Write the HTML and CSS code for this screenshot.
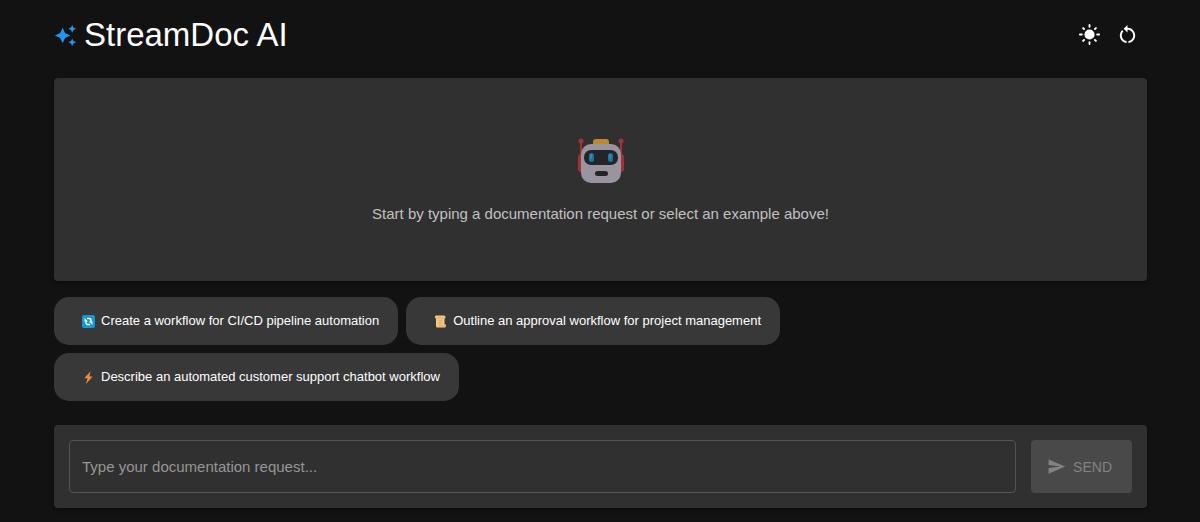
FILE: index.html
```html
<!DOCTYPE html>
<html lang="en">
<head>
<meta charset="utf-8">
<meta name="viewport" content="width=device-width, initial-scale=1">
<title>StreamDoc AI</title>
<link rel="stylesheet" href="styles.css">
</head>
<body>
<div class="container">
  <header class="header">
    <h1 class="title">
      <svg class="icon title-icon" viewBox="0 0 24 24" aria-hidden="true"><path d="m19 9 1.250-2.750L23 5l-2.750-1.250L19 1l-1.250 2.750L15 5l2.750 1.250zm0 6-1.250 2.750L15 19l2.750 1.250L19 23l1.250-2.750L23 19l-2.750-1.250zm-7.500-5.500L9 4 6.500 9.500 1 12l5.500 2.500L9 20l2.500-5.500L17 12z"/></svg>
      StreamDoc AI
    </h1>
    <div class="actions">
      <button class="icon-button" type="button" aria-label="Toggle theme">
        <svg class="icon" viewBox="0 0 24 24" aria-hidden="true"><circle cx="12" cy="12" r="5.300"/><g class="rays"><path d="M12 2v2M12 20v2M2 12h2M20 12h2M5.300 5.300l1 1M17.700 17.700l1 1M5.300 18.700l1-1M17.700 6.300l1-1"/></g></svg>
      </button>
      <button class="icon-button" type="button" aria-label="Reset conversation">
        <svg class="icon" viewBox="0 0 24 24" aria-hidden="true"><path d="M12 5V2L8 6l4 4V7c3.310 0 6 2.690 6 6 0 2.970-2.170 5.430-5 5.910v2.020c3.950-.490 7-3.850 7-7.930 0-4.420-3.580-8-8-8m-6 8c0-1.650.670-3.150 1.760-4.240L6.340 7.340C4.900 8.790 4 10.790 4 13c0 4.080 3.050 7.440 7 7.930v-2.020c-2.830-.480-5-2.940-5-5.910"/></svg>
      </button>
    </div>
  </header>

  <main>
    <section class="panel empty">
      <svg class="robot" viewBox="0 0 46 46" aria-hidden="true">
        <g fill="#a33238">
          <rect x="2" y="3" width="2" height="16"/><rect x="42" y="3" width="2" height="16"/>
          <circle cx="3" cy="3" r="2.500"/><circle cx="43" cy="3" r="2.500"/>
          <rect x="0" y="16" width="6" height="18" rx="3"/><rect x="40" y="16" width="6" height="18" rx="3"/>
        </g>
        <rect x="15" y="1" width="16" height="8" rx="3" fill="#bd8930"/>
        <rect x="3" y="6" width="40" height="39" rx="10" fill="#99949e"/>
        <rect x="6" y="12" width="34" height="15" rx="7" fill="#24242a"/>
        <rect x="11" y="15" width="5" height="9" rx="2.500" fill="#17759e"/>
        <rect x="30" y="15" width="5" height="9" rx="2.500" fill="#17759e"/>
        <path d="M13 17v3M32 17v3" stroke="#3696b8" stroke-width="1.500" stroke-linecap="round"/>
        <rect x="17" y="33" width="13" height="5" rx="2.500" fill="#24242a"/>
      </svg>
      <p class="empty-text">Start by typing a documentation request or select an example above!</p>
    </section>

    <div class="examples">
      <button class="chip" type="button">
        <svg class="emoji" viewBox="0 0 13 13" aria-hidden="true"><rect width="13" height="13" rx="2" fill="#1597d8"/><path d="M4 6v2q0 1.500 1.500 1.500H8M9 7V5q0-1.500-1.500-1.500H5" fill="none" stroke="#fff" stroke-width="1.300"/><path d="M2.500 3v3.500H6zM10.500 10V6.500H7z" fill="#fff"/></svg>
        Create a workflow for CI/CD pipeline automation
      </button>
      <button class="chip" type="button">
        <svg class="emoji" viewBox="0 0 13 13" aria-hidden="true"><path d="M2 .500h8q1.500 0 1.500 1.500T10.500 3.500V9.500h1.500v1.500q0 1.500-1.500 1.500H3.500Q2 12.500 2 11V3.500Q.8 3.500.8 2T2 .500z" fill="#f5c785"/><path d="M2 2.800h8.500M4.500 10.800h7" stroke="#dfa05f" stroke-width=".8"/><path d="M4.500 5.300h4M4.500 7.100h4M4.500 8.900h3" stroke="#d0a066" stroke-width=".7"/></svg>
        Outline an approval workflow for project management
      </button>
      <button class="chip" type="button">
        <svg class="emoji" viewBox="0 0 13 13" aria-hidden="true"><path d="M8.500.200 2.300 7.300h3.200L4 12.900l6.700-7.500H7.400z" fill="#f08a3c"/></svg>
        Describe an automated customer support chatbot workflow
      </button>
    </div>

    <form class="panel composer">
      <input class="field" type="text" aria-label="Documentation request" placeholder="Type your documentation request...">
      <button class="send" type="submit" disabled>
        <svg class="icon send-icon" viewBox="0 0 24 24" aria-hidden="true"><path d="M2.010 21 23 12 2.010 3 2 10l15 2-15 2z"/></svg>
        SEND
      </button>
    </form>
  </main>
</div>
</body>
</html>
```
FILE: styles.css
```css
* {
  box-sizing: border-box;
}

body {
  margin: 0;
  background: #121212;
  color: #fff;
  font-family: "Liberation Sans", Arial, sans-serif;
  font-size: 15px;
}

button,
input {
  font: inherit;
  color: inherit;
}

.container {
  padding: 15px 53px 14px 54px;
}

.header {
  display: flex;
  align-items: center;
  justify-content: space-between;
  margin-bottom: 23px;
}

.title {
  display: flex;
  align-items: center;
  gap: 7px;
  margin: 0;
  font-size: 33px;
  font-weight: 400;
  line-height: 40px;
}

.icon {
  display: block;
  width: 23px;
  height: 23px;
  fill: currentColor;
}

.title-icon {
  color: #2196f3;
}

.rays {
  fill: none;
  stroke: currentColor;
  stroke-width: 2;
  stroke-linecap: round;
}

.actions {
  display: flex;
}

.icon-button {
  padding: 7px 8px 9px 7px;
  border: 0;
  border-radius: 50%;
  background: none;
}

.panel {
  border-radius: 4px;
  background: #303030;
  box-shadow: 0 2px 4px rgba(0, 0, 0, 0.4);
}

.empty {
  display: flex;
  flex-direction: column;
  align-items: center;
  padding: 60px 15px 56px;
}

.robot {
  width: 46px;
  height: 46px;
}

.empty-text {
  margin: 19px 0 0;
  color: #c1c1c1;
  line-height: 22px;
}

.examples {
  display: flex;
  flex-wrap: wrap;
  gap: 8px;
  margin: 16px 0 24px;
}

.chip {
  display: flex;
  align-items: center;
  gap: 6px;
  padding: 12px 19px 12px 28px;
  border: 0;
  border-radius: 15px;
  background: #383838;
  font-size: 13px;
  line-height: 24px;
}

.emoji {
  width: 13px;
  height: 13px;
}

.composer {
  display: flex;
  gap: 15px;
  padding: 15px;
}

.field {
  flex: 1;
  min-width: 0;
  height: 53px;
  padding: 0 12px;
  border: 1px solid #545454;
  border-radius: 4px;
  background: transparent;
}

.field::placeholder {
  color: #969696;
  opacity: 1;
}

.send {
  display: flex;
  align-items: center;
  gap: 7px;
  padding: 0 20px 0 16px;
  border: 0;
  border-radius: 4px;
  background: #494949;
  color: #838383;
  font-size: 14px;
}

.send-icon {
  width: 19px;
  height: 19px;
}
```
